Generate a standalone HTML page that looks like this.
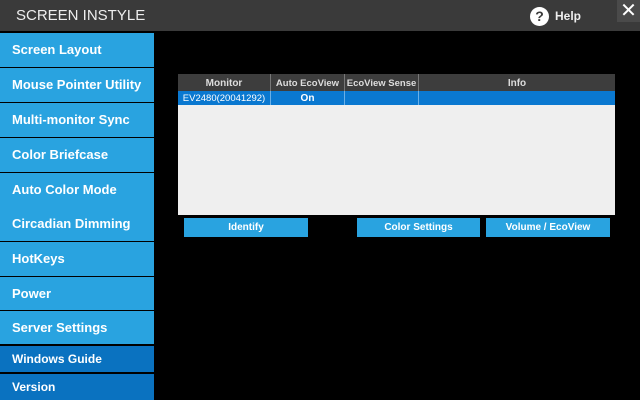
<!DOCTYPE html>
<html><head><style>
*{margin:0;padding:0;box-sizing:border-box}
body{width:640px;height:400px;background:#000;font-family:"Liberation Sans",sans-serif;position:relative;overflow:hidden}
.hdr{position:absolute;left:0;top:0;width:640px;height:31px;background:#3a3a3a}
.title{position:absolute;left:16px;top:7px;color:#eee;font-size:15px}
.help{position:absolute;left:530px;top:7px;width:19px;height:19px;border-radius:50%;background:#fff;color:#3a3a3a;font-weight:bold;font-size:14px;text-align:center;line-height:19px}
.helpt{position:absolute;left:555px;top:9px;color:#eee;font-size:12px;font-weight:bold}
.close{position:absolute;left:617px;top:0;width:23px;height:22px;background:#4a4a4a;color:#fff;font-size:20px;text-align:center;line-height:22px}
.nav{position:absolute;left:0;width:154px;color:#fff;font-weight:bold;padding-left:12px;background:#29a3e0;white-space:nowrap}
.nav.d{background:#0a72c0;font-size:12px}
.c{position:absolute;text-align:center;font-size:10px;font-weight:bold;white-space:nowrap;color:#fff}
.btn{position:absolute;top:218px;height:19px;background:#29a3e0;color:#fff;font-size:10px;font-weight:bold;text-align:center;line-height:19px}
</style></head><body>
<div class="hdr"><div class="title">SCREEN INSTYLE</div><div class="help">?</div><div class="helpt">Help</div><div class="close">✕</div></div>
<div class="nav" style="top:33px;height:34px;line-height:34px;font-size:13px">Screen Layout</div>
<div class="nav" style="top:68px;height:34px;line-height:34px;font-size:13px">Mouse Pointer Utility</div>
<div class="nav" style="top:103px;height:34px;line-height:34px;font-size:13px">Multi-monitor Sync</div>
<div class="nav" style="top:138px;height:34px;line-height:34px;font-size:13px">Color Briefcase</div>
<div class="nav" style="top:173px;height:34px;line-height:34px;font-size:13px">Auto Color Mode</div>
<div class="nav" style="top:207px;height:34px;line-height:34px;font-size:13px">Circadian Dimming</div>
<div class="nav" style="top:242px;height:34px;line-height:34px;font-size:13px">HotKeys</div>
<div class="nav" style="top:277px;height:33px;line-height:33px;font-size:13px">Power</div>
<div class="nav" style="top:311px;height:33px;line-height:33px;font-size:13px">Server Settings</div>
<div class="nav d" style="top:346px;height:26px;line-height:26px">Windows Guide</div>
<div class="nav d" style="top:374px;height:26px;line-height:26px">Version</div>

<div style="position:absolute;left:178px;top:74px;width:437px;height:141px;background:#efefef"></div>
<div style="position:absolute;left:178px;top:74px;width:437px;height:17px;background:#3d3d3d"></div>
<div style="position:absolute;left:178px;top:91px;width:437px;height:14px;background:#0a78d0"></div>
<div style="position:absolute;left:270px;top:74px;width:1px;height:17px;background:#777"></div>
<div style="position:absolute;left:344px;top:74px;width:1px;height:17px;background:#777"></div>
<div style="position:absolute;left:418px;top:74px;width:1px;height:17px;background:#777"></div>
<div style="position:absolute;left:270px;top:91px;width:1px;height:14px;background:#6ab0e8"></div>
<div style="position:absolute;left:344px;top:91px;width:1px;height:14px;background:#6ab0e8"></div>
<div style="position:absolute;left:418px;top:91px;width:1px;height:14px;background:#6ab0e8"></div>
<div class="c" style="left:178px;width:92px;top:78px;color:#ddd">Monitor</div>
<div class="c" style="left:271px;width:73px;top:78px;color:#ddd;font-size:9.5px">Auto EcoView</div>
<div class="c" style="left:345px;width:73px;top:78px;color:#ddd;font-size:9.5px">EcoView Sense</div>
<div class="c" style="left:419px;width:196px;top:78px;color:#ddd">Info</div>
<div class="c" style="left:178px;width:92px;top:93px;font-size:9.5px;font-weight:normal">EV2480(20041292)</div>
<div class="c" style="left:271px;width:73px;top:93px">On</div>

<div class="btn" style="left:184px;width:124px">Identify</div>
<div class="btn" style="left:357px;width:123px">Color Settings</div>
<div class="btn" style="left:486px;width:124px">Volume / EcoView</div>
</body></html>
